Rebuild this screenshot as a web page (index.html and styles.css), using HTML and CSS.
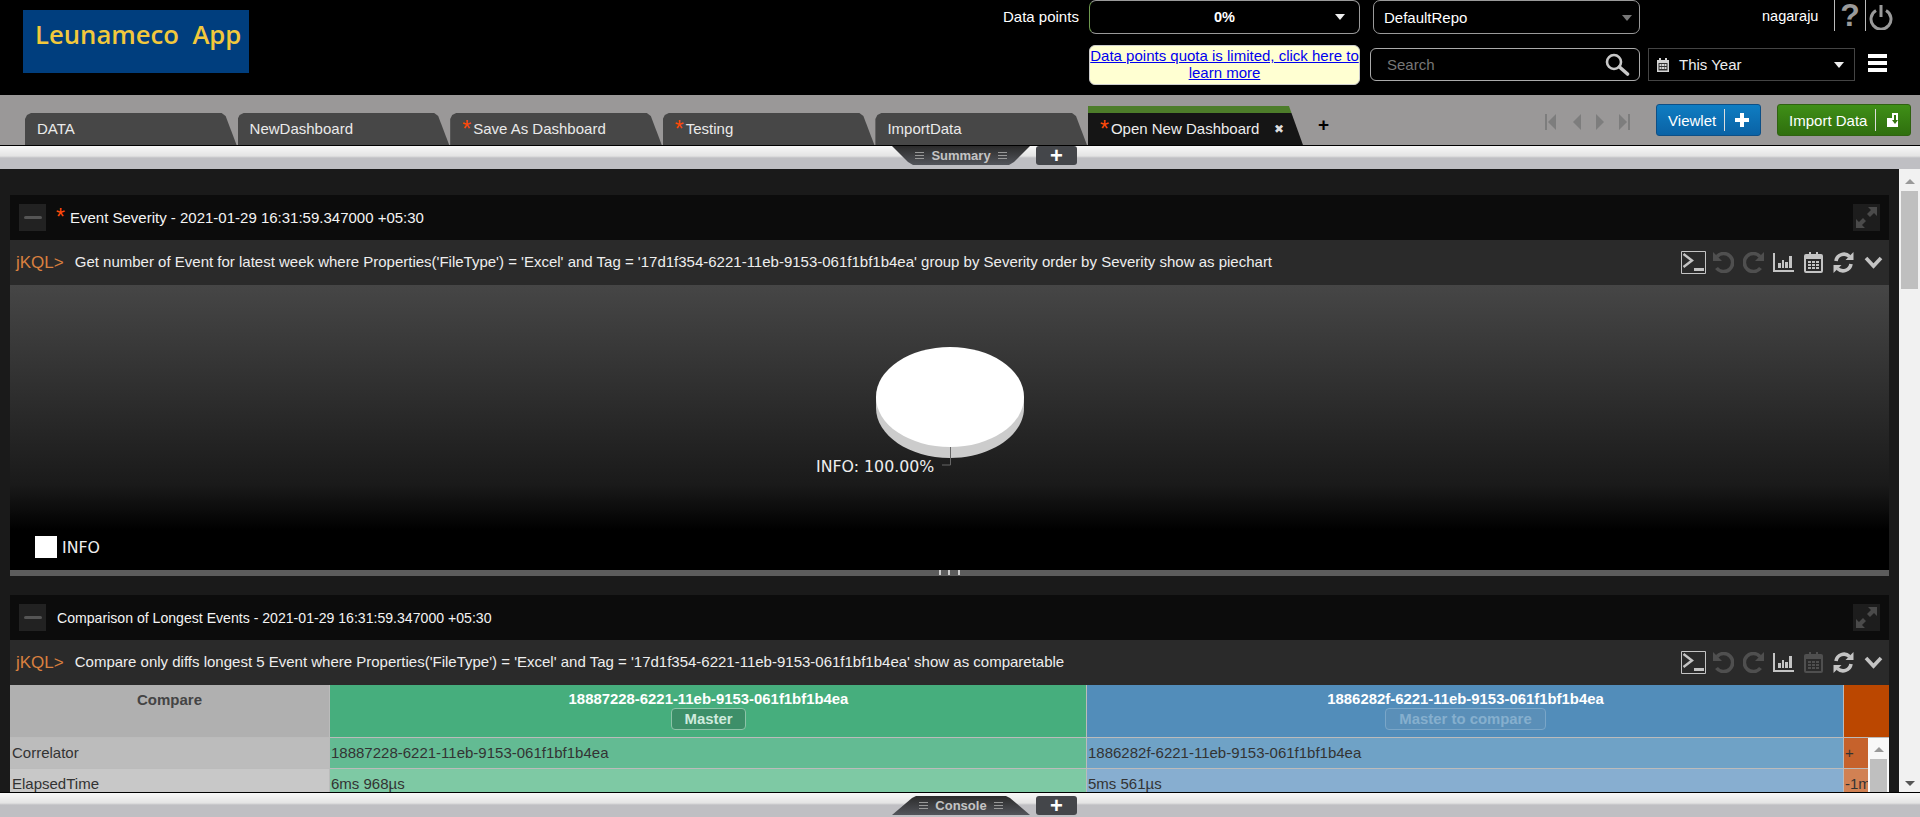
FILE: index.html
```html
<!DOCTYPE html>
<html lang="en">
<head>
  <meta charset="UTF-8">
  <title>Leunameco App</title>
  <link rel="stylesheet" href="styles.css">
</head>
<body>
  <header class="topbar">
    <div class="logo">Leunameco&nbsp; App</div>
    <div class="top-right">
      <div class="top-row">
        <span class="dp-label">Data points</span>
        <div class="select select-dp"><span class="dp-value">0%</span><i class="caret"></i></div>
        <div class="select select-repo"><span>DefaultRepo</span><i class="caret caret-dim"></i></div>
        <span class="username">nagaraju</span>
        <span class="top-icon help">?</span>
        <span class="top-icon power">
          <svg width="24" height="26" viewBox="0 0 24 26"><path d="M7 6.500a10 10 0 1 0 10 0" fill="none" stroke="#9a9a9a" stroke-width="3"/><path d="M12 1v12" stroke="#9a9a9a" stroke-width="3"/></svg>
        </span>
      </div>
      <div class="bottom-row">
        <a class="quota" href="#">Data points quota is limited, click here to learn more</a>
        <div class="search">
          <span>Search</span>
          <svg width="26" height="24" viewBox="0 0 26 24"><circle cx="10" cy="9" r="7" fill="none" stroke="#c8c8c8" stroke-width="2.600"/><path d="M15.500 14l8 7" stroke="#c8c8c8" stroke-width="3.600" stroke-linecap="round"/></svg>
        </div>
        <div class="date-range">
          <svg width="12" height="14" viewBox="0 0 12 14"><path d="M0 2h2V0h2v2h4V0h2v2h2v12H0z" fill="#d4d4d4"/><path d="M1.500 5h9v7.500h-9z" fill="#333"/><path d="M2.500 6h2v2h-2zM5 6h2v2H5zM7.500 6h2v2h-2zM2.500 9h2v2h-2zM5 9h2v2H5zM7.500 9h2v2h-2z" fill="#d4d4d4"/></svg>
          <span>This Year</span>
          <i class="caret"></i>
        </div>
        <div class="menu-btn"><i></i><i></i><i></i></div>
      </div>
    </div>
  </header>

  <nav class="tabstrip">
    <div class="tab">DATA</div>
    <div class="tab">NewDashboard</div>
    <div class="tab"><b class="star">*</b>Save As Dashboard</div>
    <div class="tab"><b class="star">*</b>Testing</div>
    <div class="tab">ImportData</div>
    <div class="tab tab-active"><b class="star">*</b>Open New Dashboard<span class="tab-close">&#10006;</span></div>
    <span class="tab-add">+</span>
    <div class="tab-nav">
      <svg width="90" height="16" viewBox="0 0 90 16" fill="#7d7d7d"><path d="M0 0h2v16H0zM11 0v16L3 8zM36 0v16l-8-8zM51 0v16l8-8zM74 0v16l8-8zM83 0h2v16h-2z"/></svg>
    </div>
    <button class="action action-blue">Viewlet<span class="action-icon">
      <svg width="16" height="16" viewBox="0 0 16 16"><path d="M6 1h4v5h5v4h-5v5H6v-5H1V6h5z" fill="#fff"/></svg>
    </span></button>
    <button class="action action-green">Import Data<span class="action-icon">
      <svg width="14" height="16" viewBox="0 0 14 16"><path d="M6 1h6v14H1V6h5z" fill="#fff"/><path d="M8 3h2v5h2l-3 4-3-4h2z" fill="#33750f"/></svg>
    </span></button>
  </nav>

  <div class="splitbar">
    <div class="split-tab"><span class="grip"></span>Summary<span class="grip"></span></div>
    <div class="split-add">+</div>
  </div>

  <main class="workspace">
    <div class="panels">
      <section class="panel">
        <div class="panel-title">
          <span class="collapse-btn"><i></i></span>
          <b class="title-star">*</b>
          <span class="title-first">Event Severity - 2021-01-29 16:31:59.347000 +05:30</span>
          <span class="expand-btn">
            <svg width="21" height="21" viewBox="0 0 21 21" fill="#4a4a4a"><path d="M12 0h9v9l-3-3-4 4-3-3 4-4zM9 21H0v-9l3 3 4-4 3 3-4 4z"/></svg>
          </span>
        </div>
        <div class="query-bar">
          <span class="jkql">jKQL&gt;</span>
          <span class="query">Get number of Event for latest week where Properties('FileType') = 'Excel' and Tag = '17d1f354-6221-11eb-9153-061f1bf1b4ea' group by Severity order by Severity show as piechart</span>
          <div class="tools">
            <svg width="25" height="23" viewBox="0 0 25 23"><path d="M.5.500h24v22H.5z" fill="none" stroke="#c4c4c4"/><path d="M2.500 3l8.500 6.500L2.500 16" fill="none" stroke="#c4c4c4" stroke-width="2.400"/><path d="M13 17h10v3H13z" fill="#c4c4c4"/></svg>
            <svg width="21" height="21" viewBox="0 0 21 21"><path d="M3.500 16A9 9 0 1 0 4 4.500" fill="none" stroke="#4f4f4f" stroke-width="3.600"/><path d="M0 0v9h9z" fill="#4f4f4f"/></svg>
            <svg width="21" height="21" viewBox="0 0 21 21"><path d="M17.500 16A9 9 0 1 1 17 4.500" fill="none" stroke="#4f4f4f" stroke-width="3.600"/><path d="M21 0v9h-9z" fill="#4f4f4f"/></svg>
            <svg width="21" height="19" viewBox="0 0 21 19"><path d="M0 0h2v17h19v2H0z" fill="#c4c4c4"/><path d="M5 10h3v5H5zM9 7h2v8H9zM12 9h3v6h-3zM16 3h3v12h-3z" fill="#c4c4c4"/></svg>
            <svg width="19" height="21" viewBox="0 0 19 21"><path d="M3 2h2V0h2v2h5V0h2v2h3a2 2 0 0 1 2 2v15a2 2 0 0 1-2 2H2a2 2 0 0 1-2-2V4a2 2 0 0 1 2-2z" fill="#c4c4c4"/><path d="M2 7h15v12H2z" fill="#2a2a2a"/><path d="M4 9h3v2H4zM8 9h3v2H8zM12 9h3v2h-3zM4 12h3v2H4zM8 12h3v2H8zM12 12h3v2h-3zM4 15h3v2H4zM8 15h3v2H8zM12 15h3v2h-3z" fill="#c4c4c4"/></svg>
            <svg width="21" height="21" viewBox="0 0 21 21"><path d="M3 9a8 8 0 0 1 13.500-4.500M18 12a8 8 0 0 1-13.500 4.500" fill="none" stroke="#c4c4c4" stroke-width="3.600"/><path d="M20.500 0v8h-8zM.5 21v-8h8z" fill="#c4c4c4"/></svg>
            <svg width="19" height="13" viewBox="0 0 19 13"><path d="M2 2l7.500 8L17 2" fill="none" stroke="#c4c4c4" stroke-width="3.600"/></svg>
          </div>
        </div>
        <div class="pie-area">
          <div class="pie">
            <svg width="160" height="140" viewBox="0 0 160 140">
              <path d="M5 54v11c0 27 33 50 74 50s74-23 74-50V54z" fill="#cccccc"/>
              <ellipse cx="79" cy="54" rx="74" ry="50" fill="#fff"/>
              <path d="M79.500 104v18H71" fill="none" stroke="#666"/>
            </svg>
            <span class="pie-label">INFO: 100.00%</span>
          </div>
          <div class="legend"><i></i>INFO</div>
        </div>
        <div class="panel-resize"><i class="handle"></i></div>
      </section>

      <section class="panel">
        <div class="panel-title">
          <span class="collapse-btn"><i></i></span>
          <span class="title-plain">Comparison of Longest Events - 2021-01-29 16:31:59.347000 +05:30</span>
          <span class="expand-btn">
            <svg width="21" height="21" viewBox="0 0 21 21" fill="#4a4a4a"><path d="M12 0h9v9l-3-3-4 4-3-3 4-4zM9 21H0v-9l3 3 4-4 3 3-4 4z"/></svg>
          </span>
        </div>
        <div class="query-bar">
          <span class="jkql">jKQL&gt;</span>
          <span class="query">Compare only diffs longest 5 Event where Properties('FileType') = 'Excel' and Tag = '17d1f354-6221-11eb-9153-061f1bf1b4ea' show as comparetable</span>
          <div class="tools">
            <svg width="25" height="23" viewBox="0 0 25 23"><path d="M.5.500h24v22H.5z" fill="none" stroke="#c4c4c4"/><path d="M2.500 3l8.500 6.500L2.500 16" fill="none" stroke="#c4c4c4" stroke-width="2.400"/><path d="M13 17h10v3H13z" fill="#c4c4c4"/></svg>
            <svg width="21" height="21" viewBox="0 0 21 21"><path d="M3.500 16A9 9 0 1 0 4 4.500" fill="none" stroke="#4f4f4f" stroke-width="3.600"/><path d="M0 0v9h9z" fill="#4f4f4f"/></svg>
            <svg width="21" height="21" viewBox="0 0 21 21"><path d="M17.500 16A9 9 0 1 1 17 4.500" fill="none" stroke="#4f4f4f" stroke-width="3.600"/><path d="M21 0v9h-9z" fill="#4f4f4f"/></svg>
            <svg width="21" height="19" viewBox="0 0 21 19"><path d="M0 0h2v17h19v2H0z" fill="#c4c4c4"/><path d="M5 10h3v5H5zM9 7h2v8H9zM12 9h3v6h-3zM16 3h3v12h-3z" fill="#c4c4c4"/></svg>
            <svg width="19" height="21" viewBox="0 0 19 21"><path d="M3 2h2V0h2v2h5V0h2v2h3a2 2 0 0 1 2 2v15a2 2 0 0 1-2 2H2a2 2 0 0 1-2-2V4a2 2 0 0 1 2-2z" fill="#4f4f4f"/><path d="M2 7h15v12H2z" fill="#2a2a2a"/><path d="M4 9h3v2H4zM8 9h3v2H8zM12 9h3v2h-3zM4 12h3v2H4zM8 12h3v2H8zM12 12h3v2h-3zM4 15h3v2H4zM8 15h3v2H8zM12 15h3v2h-3z" fill="#4f4f4f"/></svg>
            <svg width="21" height="21" viewBox="0 0 21 21"><path d="M3 9a8 8 0 0 1 13.500-4.500M18 12a8 8 0 0 1-13.500 4.500" fill="none" stroke="#c4c4c4" stroke-width="3.600"/><path d="M20.500 0v8h-8zM.5 21v-8h8z" fill="#c4c4c4"/></svg>
            <svg width="19" height="13" viewBox="0 0 19 13"><path d="M2 2l7.500 8L17 2" fill="none" stroke="#c4c4c4" stroke-width="3.600"/></svg>
          </div>
        </div>
        <div class="compare">
          <div class="cell head-label">Compare</div>
          <div class="cell head-master">
            <span>18887228-6221-11eb-9153-061f1bf1b4ea</span>
            <span class="badge">Master</span>
          </div>
          <div class="cell head-other">
            <span>1886282f-6221-11eb-9153-061f1bf1b4ea</span>
            <span class="badge badge-off">Master to compare</span>
          </div>
          <div class="cell head-diff"></div>

          <div class="cell row-label">Correlator</div>
          <div class="cell master-1">18887228-6221-11eb-9153-061f1bf1b4ea</div>
          <div class="cell other-1">1886282f-6221-11eb-9153-061f1bf1b4ea</div>
          <div class="cell diff-1">+</div>

          <div class="cell row-label-2">ElapsedTime</div>
          <div class="cell master-2">6ms 968µs</div>
          <div class="cell other-2">5ms 561µs</div>
          <div class="cell diff-2">-1ms</div>

          <div class="table-scroll"><i class="arrow-up"></i><i class="thumb"></i></div>
        </div>
      </section>
    </div>
    <div class="page-scroll"><i class="arrow-up"></i><i class="thumb"></i><i class="arrow-down"></i></div>
  </main>

  <div class="splitbar splitbar-bottom">
    <div class="split-tab"><span class="grip"></span>Console<span class="grip"></span></div>
    <div class="split-add">+</div>
  </div>
</body>
</html>
```

FILE: styles.css
```css
html, body {
  margin: 0;
  height: 817px;
  overflow: hidden;
  background: #000;
  font-family: "Liberation Sans", Arial, sans-serif;
  font-size: 15px;
}
i { display: block; }

/* top header */
.topbar {
  height: 95px;
  display: flex;
  justify-content: space-between;
  background: #000;
  color: #fff;
}
.logo {
  width: 226px;
  height: 63px;
  margin: 10px 0 0 23px;
  background: #003e7e;
  color: #f2c83c;
  font-family: "Open Sans", sans-serif;
  font-size: 25.7px;
  font-weight: 600;
  line-height: 49px;
  padding-left: 12px;
  box-sizing: border-box;
  white-space: nowrap;
}
.top-right { width: 917px; }
.top-row {
  display: flex;
  align-items: flex-start;
  height: 45px;
}
.dp-label { width: 86px; line-height: 34px; }
.select {
  height: 34px;
  border: 1px solid #9a9a9a;
  border-radius: 7px;
  box-sizing: border-box;
  display: flex;
  align-items: center;
  position: relative;
}
.select-dp {
  width: 271px;
  margin-right: 13px;
  justify-content: center;
  border-left-color: #6f9a4f;
}
.dp-value { font-weight: bold; font-size: 14.5px; }
.select-dp .caret { position: absolute; right: 14px; top: 13px; }
.select-repo { width: 267px; padding-left: 10px; }
.select-repo .caret { position: absolute; right: 7px; top: 14px; }
.caret {
  width: 0;
  height: 0;
  border-left: 5px solid transparent;
  border-right: 5px solid transparent;
  border-top: 6px solid #eee;
}
.caret-dim { border-top-color: #777; }
.username { margin-left: 122px; width: 72px; line-height: 32px; font-size: 14.5px; }
.top-icon {
  height: 31px;
  border-left: 1px solid #bbb;
  display: flex;
  justify-content: center;
}
.help {
  width: 30px;
  color: #9a9a9a;
  font-size: 32px;
  font-weight: bold;
  line-height: 31px;
}
.power { width: 30px; padding-top: 4px; height: 27px; }

.bottom-row { display: flex; align-items: flex-start; margin-left: 86px; }
.quota {
  width: 271px;
  height: 40px;
  box-sizing: border-box;
  background: #ffffd2;
  border: 1px solid #ccc;
  border-radius: 6px;
  color: #00e;
  text-align: center;
  line-height: 17px;
  padding-top: 1px;
  margin-right: 10px;
}
.search {
  width: 270px;
  height: 33px;
  margin-top: 3px;
  box-sizing: border-box;
  border: 1px solid #aaa;
  border-radius: 6px;
  color: #777;
  display: flex;
  justify-content: space-between;
  align-items: center;
  padding: 0 9px 0 16px;
}
.date-range {
  width: 207px;
  height: 33px;
  margin: 3px 0 0 8px;
  box-sizing: border-box;
  border: 1px solid #444;
  color: #eee;
  display: flex;
  align-items: center;
  padding: 0 10px 0 8px;
  gap: 10px;
}
.date-range .caret { margin-left: auto; }
.menu-btn { margin: 9px 0 0 13px; width: 19px; }
.menu-btn i { height: 4px; background: #fff; margin-bottom: 3px; }

/* tab strip */
.tabstrip {
  height: 50px;
  background: #9a9898;
  display: flex;
  align-items: flex-end;
  padding-left: 25px;
  position: relative;
  color: #fff;
}
.tab {
  width: 212.6px;
  height: 32px;
  box-sizing: border-box;
  background: #474747;
  color: #eaeaea;
  line-height: 32px;
  padding-left: 12px;
  white-space: nowrap;
  clip-path: polygon(0 6px, 2px 2px, 6px 0, calc(100% - 16px) 0, calc(100% - 12px) 3px, calc(100% - 1px) 100%, 0 100%);
}
.star {
  color: #ff4a0a;
  font-size: 23px;
  font-weight: normal;
  line-height: 0;
  vertical-align: -3px;
  margin-right: 2px;
}
.tab-active {
  height: 39px;
  width: 215px;
  padding-top: 7px;
  background: linear-gradient(#4d7d2a 7px, #151515 7px);
  color: #eee;
  clip-path: polygon(0 0, calc(100% - 14px) 0, 100% 100%, 0 100%);
}
.tab-close { margin-left: 15px; font-size: 12px; color: #ddd; vertical-align: 1px; }
.tab-add {
  color: #000;
  font-size: 19px;
  font-weight: bold;
  margin: 0 0 9px 15px;
}
.tab-nav { margin: 0 0 15px 216px; width: 111px; height: 16px; }
.action {
  height: 32px;
  margin-bottom: 9px;
  box-sizing: border-box;
  border: 1px solid #0d4f86;
  border-radius: 3px;
  color: #fff;
  font-family: inherit;
  font-size: 15px;
  white-space: nowrap;
  display: flex;
  align-items: center;
  padding: 0 0 0 11px;
}
.action-icon {
  display: flex;
  justify-content: center;
  align-items: center;
  margin-left: 8px;
  height: 22px;
  border-left: 1px solid #ddd;
}
.action-blue {
  width: 105px;
  background: linear-gradient(#0f7dc2, #0a62a5);
  margin-right: 16px;
}
.action-blue .action-icon { width: 34px; }
.action-green {
  width: 134px;
  background: linear-gradient(#3f8f17, #2f6f0e);
  border-color: #2f6210;
}
.action-green .action-icon { width: 35px; }

/* split bars */
.splitbar {
  height: 24px;
  box-sizing: border-box;
  border-top: 1px solid #000;
  background: linear-gradient(#f8f8f8 0, #e4e4e4 10px, #bfbfc3 12px, #bfbfc3 100%);
  display: flex;
  align-items: flex-start;
  gap: 6px;
  padding-left: 892px;
}
.splitbar-bottom {
  height: 25px;
  padding-top: 3px;
}
.split-tab {
  width: 138px;
  height: 19px;
  background: linear-gradient(#2b2b2b, #53555b);
  color: #c4c4c4;
  font-size: 13px;
  font-weight: bold;
  display: flex;
  justify-content: center;
  align-items: center;
  gap: 7px;
  clip-path: polygon(0 0, 100% 0, calc(100% - 16px) 16px, calc(100% - 21px) 100%, 21px 100%, 16px 16px);
}
.splitbar-bottom .split-tab {
  clip-path: polygon(20px 2px, 24px 0, calc(100% - 24px) 0, calc(100% - 20px) 2px, 100% 100%, 0 100%);
}
.grip {
  width: 9px;
  height: 8px;
  background: repeating-linear-gradient(#999 0 1px, transparent 1px 3px);
}
.split-add {
  width: 41px;
  height: 19px;
  background: #44464a;
  border-radius: 3px;
  color: #fff;
  font-size: 22px;
  font-weight: bold;
  line-height: 19px;
  text-align: center;
}

/* main scrolling area */
.workspace {
  height: 623px;
  background: #1a1a1a;
  display: flex;
  overflow: hidden;
}
.panels {
  width: 1899px;
  box-sizing: border-box;
  padding: 26px 10px 0;
}
.panel-title {
  height: 45px;
  background: #0c0c0c;
  color: #f4f4f4;
  font-size: 14.1px;
  display: flex;
  align-items: center;
  padding: 0 9px;
}
.collapse-btn {
  width: 27px;
  height: 27px;
  background: #222;
  display: flex;
  justify-content: center;
  align-items: center;
}
.collapse-btn i { width: 18px; height: 3px; background: #555; border-radius: 2px; }
.title-star {
  color: #ff4a0a;
  font-size: 23px;
  font-weight: normal;
  margin: 0 5px 0 10px;
}
.title-first { font-size: 15px; }
.title-plain { margin-left: 11px; }
.expand-btn {
  width: 27px;
  height: 27px;
  margin-left: auto;
  background: #1d1d1d;
  display: flex;
  justify-content: center;
  align-items: center;
}
.query-bar {
  height: 45px;
  background: #2a2a2a;
  display: flex;
  align-items: center;
  padding-left: 6px;
  color: #eee;
}
.jkql { color: #d9803f; font-size: 17px; margin-right: 11px; }
.query { padding-bottom: 2px; }
.tools {
  margin-left: auto;
  display: flex;
  align-items: center;
  gap: 9px;
  padding-right: 6px;
}
.tools svg:first-child { margin-right: -2px; }
.tools svg:nth-child(n+5) { margin-left: 1px; }

/* pie */
.pie-area {
  height: 285px;
  background: linear-gradient(#464646, #1a1a1a 70%, #000 86%);
  position: relative;
}
.pie {
  position: absolute;
  left: 861px;
  top: 58px;
}
.pie-label {
  position: absolute;
  left: -55px;
  top: 114px;
  color: #eee;
  font-family: "DejaVu Sans", sans-serif;
  font-size: 15.8px;
  white-space: nowrap;
}
.legend {
  position: absolute;
  left: 25px;
  bottom: 12px;
  display: flex;
  align-items: center;
  gap: 5px;
  color: #eee;
  font-family: "DejaVu Sans", sans-serif;
  font-size: 15.8px;
}
.legend i { width: 22px; height: 22px; background: #fff; }
.panel-resize {
  height: 6px;
  background: #5c5c5c;
  margin-bottom: 19px;
}
.handle {
  width: 22px;
  height: 5px;
  margin: 0 auto;
  background: repeating-linear-gradient(90deg, #ccc 0 2px, transparent 2px 9.500px);
}

/* compare table */
.compare {
  position: relative;
  display: grid;
  grid-template-columns: 319px 757px 757px 46px;
  grid-template-rows: 53px 31px 31px;
  color: #333;
}
.cell {
  box-sizing: border-box;
  padding-left: 1px;
  border-left: 1px solid #bbb;
  border-bottom: 1px solid #bbb;
  line-height: 30px;
  white-space: nowrap;
  overflow: hidden;
}
.head-label {
  background: #b0b0b0;
  color: #444;
  font-weight: bold;
  text-align: center;
  border-left: 0;
  padding: 0;
}
.head-master, .head-other {
  color: #fff;
  font-weight: bold;
  font-size: 14.9px;
  text-align: center;
  line-height: 15px;
  padding-top: 7px;
  display: flex;
  flex-direction: column;
  align-items: center;
  gap: 1px;
}
.head-master { background: #46ae7d; }
.head-other { background: #528dba; }
.head-diff { background: #bb4700; }
.badge {
  background: #3d8f69;
  border: 1px solid #8cc4a8;
  border-radius: 4px;
  color: #cfeadd;
  padding: 2px 12px;
  line-height: 16px;
}
.badge-off {
  background: #5a8fb8;
  border-color: #7aa6c8;
  color: #86afce;
  padding: 2px 13px;
}
.row-label { background: #bcbcbc; border-left: 0; padding-left: 2px; }
.row-label-2 { background: #c8c8c8; border-left: 0; padding-left: 2px; }
.master-1 { background: #63bb93; }
.master-2 { background: #7ec9a4; }
.other-1 { background: #6fa2c6; }
.other-2 { background: #87aed0; }
.diff-1 { background: #c6622c; }
.diff-2 { background: #d18153; }
.table-scroll {
  position: absolute;
  right: 0;
  top: 53px;
  width: 21px;
  bottom: 0;
  background: #f8f8f8;
}
.arrow-up, .arrow-down {
  width: 0;
  height: 0;
  margin: 0 auto;
  border-left: 5px solid transparent;
  border-right: 5px solid transparent;
}
.arrow-up { border-bottom: 5px solid #999; }
.arrow-down { border-top: 5px solid #555; }
.thumb { background: #bfbfbf; width: 17px; }
.table-scroll .arrow-up { margin-top: 9px; margin-bottom: 7px; }
.table-scroll .thumb { height: 60px; margin: 0 auto; }

.page-scroll {
  width: 21px;
  background: #f1f1f1;
  position: relative;
}
.page-scroll .arrow-up { margin-top: 10px; margin-bottom: 7px; }
.page-scroll .thumb { height: 98px; margin: 0 auto; }
.page-scroll .arrow-down { position: absolute; left: 6px; bottom: 6px; margin: 0; }
```
